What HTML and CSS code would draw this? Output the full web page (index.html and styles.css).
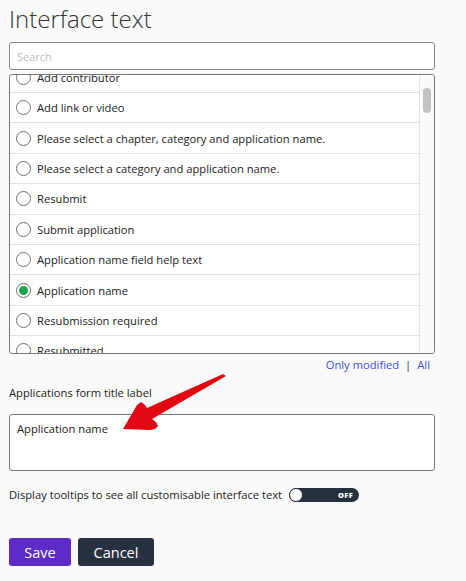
FILE: index.html
```html
<!DOCTYPE html>
<html lang="en">
<head>
  <meta charset="UTF-8">
  <meta name="viewport" content="width=device-width, initial-scale=1.0">
  <title>Interface text</title>
  <link rel="stylesheet" href="styles.css">
</head>
<body>

  <!-- Heading -->
  <h1 class="page-title">Interface text</h1>

  <!-- Search + list of strings -->
  <input class="search" type="text" placeholder="Search">

  <div class="string-list">
    <div class="rows">
      <div class="rows-inner">
        <label class="row"><span class="radio"></span>Add contributor</label>
        <label class="row"><span class="radio"></span>Add link or video</label>
        <label class="row"><span class="radio"></span>Please select a chapter, category and application name.</label>
        <label class="row"><span class="radio"></span>Please select a category and application name.</label>
        <label class="row"><span class="radio"></span>Resubmit</label>
        <label class="row"><span class="radio"></span>Submit application</label>
        <label class="row"><span class="radio"></span>Application name field help text</label>
        <label class="row"><span class="radio checked"></span>Application name</label>
        <label class="row"><span class="radio"></span>Resubmission required</label>
        <label class="row"><span class="radio"></span>Resubmitted</label>
      </div>
    </div>
    <div class="scroll-track">
      <div class="scroll-thumb"></div>
    </div>
  </div>

  <div class="filter-links">
    <a href="#">Only modified</a>
    <span class="sep">|</span>
    <a href="#">All</a>
  </div>

  <!-- Edit field -->
  <label class="field-label" for="titleLabel">Applications form title label</label>
  <textarea id="titleLabel" class="field-text">Application name</textarea>

  <!-- Tooltip toggle -->
  <div class="toggle-row">
    <span>Display tooltips to see all customisable interface text</span>
    <span class="toggle"><span class="knob"></span><span class="toggle-text">OFF</span></span>
  </div>

  <!-- Actions -->
  <div class="actions">
    <button class="btn btn-save">Save</button>
    <button class="btn btn-cancel">Cancel</button>
  </div>

  <!-- Annotation arrow -->
  <svg class="annotation" width="466" height="581" viewBox="0 0 466 581">
    <polygon fill="#e30613" points="123,429 137,405 141,402 145,405 147,408 223,374 226,376 152,419 156,422 158,426 155,429 150,430"/>
  </svg>

</body>
</html>
```

FILE: styles.css
```css
/* General Reset */
* {
  margin: 0;
  padding: 0;
  box-sizing: border-box;
}

body {
  font-family: "Open Sans", Arial, sans-serif;
  font-size: 11.2px;
  color: #222;
  background-color: #fafafa;
  padding: 0 9px;
  width: 466px;
  height: 581px;
  position: relative;
  overflow: hidden;
}

.page-title {
  font-size: 24px;
  font-weight: 300;
  color: #333;
  line-height: 33px;
  margin-top: 2px;
}

.search {
  display: block;
  width: 426px;
  height: 28px;
  margin-top: 7px;
  border: 1px solid #8a8a8a;
  border-radius: 3px;
  padding: 0 7px;
  font-family: inherit;
  font-size: 11px;
  background: #fff;
}

.search::placeholder {
  color: #c2c2c2;
}

/* List */
.string-list {
  display: flex;
  width: 426px;
  height: 280px;
  margin-top: 4px;
  border: 1px solid #777;
  border-radius: 3px;
  background: #fff;
  overflow: hidden;
}

.rows {
  flex: 1;
  overflow: hidden;
}

.rows-inner {
  margin-top: -12.4px;
}

.row {
  display: flex;
  align-items: center;
  height: 30.4px;
  border-bottom: 1px solid #e2e2e2;
  padding-left: 6px;
}

.radio {
  width: 15px;
  height: 15px;
  border: 1px solid #707070;
  border-radius: 50%;
  margin-right: 6px;
  flex-shrink: 0;
  display: flex;
  align-items: center;
  justify-content: center;
  background: #fff;
}

.radio.checked::after {
  content: "";
  width: 9px;
  height: 9px;
  border-radius: 50%;
  background: #1ba64b;
}

.scroll-track {
  width: 15px;
  background: #fafafa;
  border-left: 1px solid #e6e6e6;
  padding: 13px 3px 0 3px;
}

.scroll-thumb {
  height: 25px;
  border-radius: 4px;
  background: #c2c2c2;
}

.filter-links {
  display: flex;
  justify-content: flex-end;
  gap: 6px;
  width: 421px;
  margin-top: 3px;
  line-height: 16px;
}

.filter-links a {
  color: #3b4fe0;
  text-decoration: none;
}

.sep {
  color: #333;
}

.field-label {
  display: block;
  margin-top: 12px;
  line-height: 16px;
}

.field-text {
  display: block;
  width: 426px;
  height: 57px;
  margin-top: 13px;
  border: 1px solid #777;
  border-radius: 3px;
  padding: 6px 7px;
  font-family: inherit;
  font-size: 11.2px;
  color: #222;
  background: #fff;
  resize: none;
}

/* Toggle */
.toggle-row {
  display: flex;
  align-items: center;
  gap: 7px;
  margin-top: 16px;
  line-height: 16px;
}

.toggle {
  position: relative;
  display: flex;
  align-items: center;
  width: 70px;
  height: 14px;
  border-radius: 7px;
  background: #263140;
}

.knob {
  width: 14px;
  height: 14px;
  border-radius: 50%;
  background: #fff;
  border: 1.5px solid #263140;
}

.toggle-text {
  margin-left: auto;
  margin-right: 6px;
  color: #fff;
  font-size: 7.5px;
  font-weight: 800;
  letter-spacing: 0.3px;
}

/* Buttons */
.actions {
  display: flex;
  gap: 7px;
  margin-top: 35px;
}

.btn {
  height: 28px;
  border: none;
  border-radius: 3px;
  color: #fff;
  font-family: inherit;
  font-size: 14.5px;
  cursor: pointer;
}

.btn-save {
  width: 62px;
  background: #5f2bc8;
}

.btn-cancel {
  width: 76px;
  background: #273140;
}

.annotation {
  position: absolute;
  left: 0;
  top: 0;
  pointer-events: none;
}
```
